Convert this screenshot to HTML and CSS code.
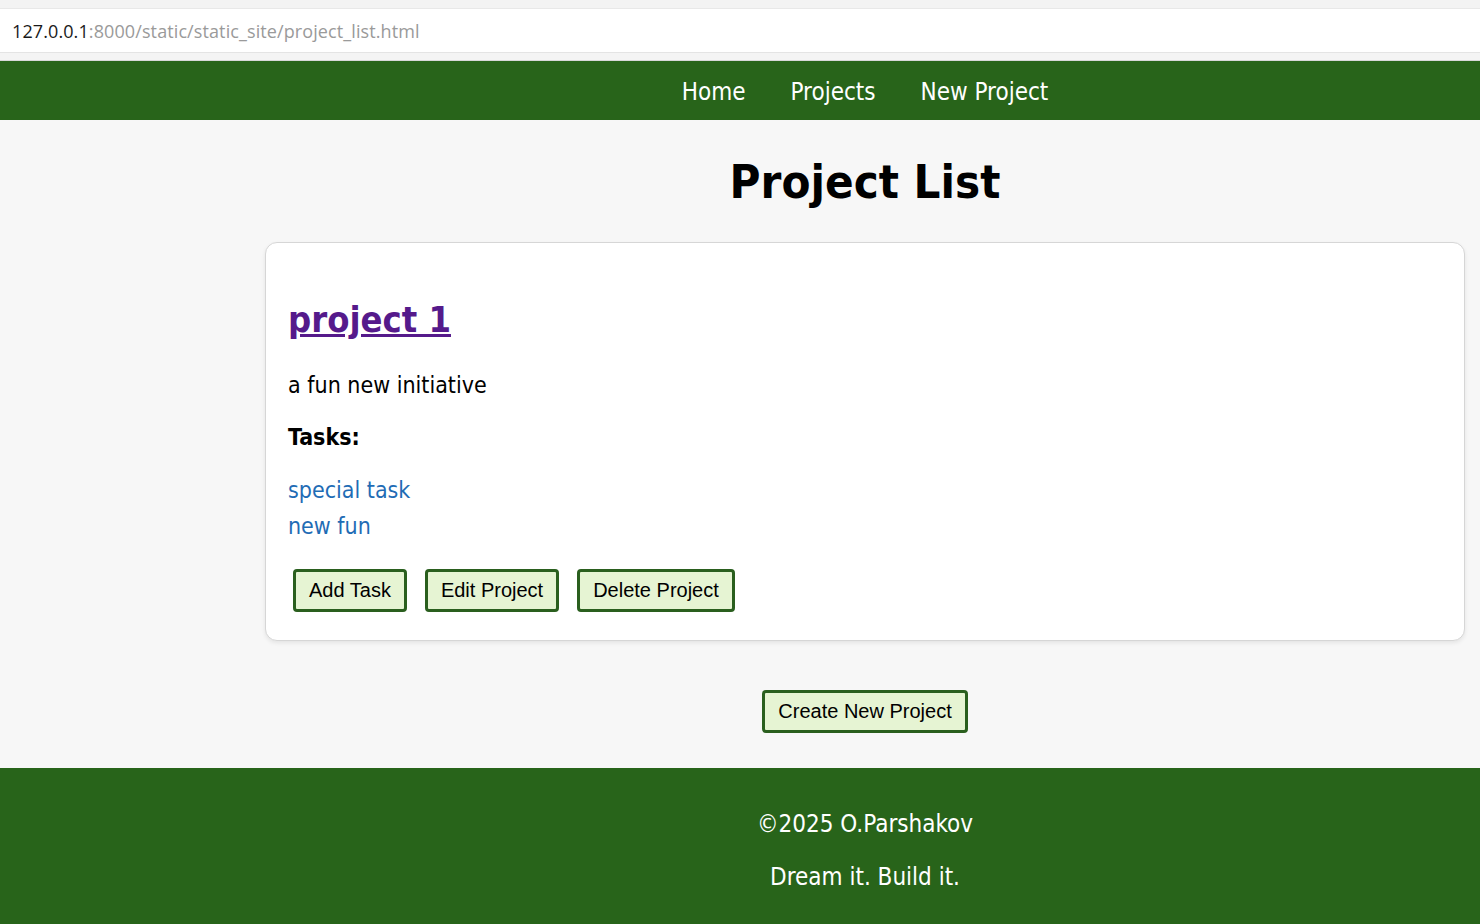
FILE: index.html
```html
<!DOCTYPE html>
<html lang="en">
<head>
<meta charset="utf-8">
<title>Project List</title>
<link rel="stylesheet" href="styles.css">
</head>
<body>
<div class="browser-top"></div>
<div class="address-bar"><span class="host">127.0.0.1</span><span class="path">:8000/static/static_site/project_list.html</span></div>
<div class="browser-gap"></div>
<header class="site-nav">
  <nav class="nav-inner">
    <a href="#">Home</a>
    <a href="#">Projects</a>
    <a href="#">New Project</a>
  </nav>
</header>
<main class="main">
  <h1 class="page-title">Project List</h1>
  <section class="card">
    <h2 class="project-title"><a href="#">project 1</a></h2>
    <p class="desc">a fun new initiative</p>
    <h3 class="tasks-title">Tasks:</h3>
    <ul class="task-list">
      <li><a href="#">special task</a></li>
      <li><a href="#">new fun</a></li>
    </ul>
    <div class="actions">
      <button class="btn">Add Task</button>
      <button class="btn">Edit Project</button>
      <button class="btn">Delete Project</button>
    </div>
  </section>
  <div class="create-row">
    <button class="btn">Create New Project</button>
  </div>
</main>
<footer class="site-footer">
  <div class="footer-inner">
    <p>©2025 O.Parshakov</p>
    <p>Dream it. Build it.</p>
  </div>
</footer>
</body>
</html>
```

FILE: styles.css
```css
* { box-sizing: border-box; }
html, body { margin: 0; padding: 0; }
body {
  font-family: "DejaVu Sans Condensed", "DejaVu Sans", sans-serif;
  background: #f7f7f7;
  color: #000;
  min-height: 924px;
  display: flex;
  flex-direction: column;
}
.browser-top { height: 9px; background: #f3f3f3; border-bottom: 1px solid #e8e8e8; }
.address-bar {
  height: 43px;
  background: #fff;
  padding-left: 12px;
  display: flex;
  align-items: center;
  font-family: "Open Sans", "Noto Sans", sans-serif;
  font-size: 18px;
  letter-spacing: 0.1px;
}
.address-bar .host { color: #1a1a1a; }
.address-bar .path { color: #9a9a9a; }
.browser-gap { height: 9px; background: #f4f4f4; border-top: 1px solid #e4e4e4; border-bottom: 1px solid #d8d8d8; }
.site-nav { background: #28641a; height: 59px; }
.nav-inner {
  margin-left: 250px;
  height: 100%;
  display: flex;
  justify-content: center;
  align-items: center;
  gap: 45px;
  padding-top: 2px;
}
.nav-inner a { color: #fff; text-decoration: none; font-size: 24px; }
.main { margin-left: 250px; padding: 0 15px; flex: 1; }
.page-title {
  text-align: center;
  font-size: 47px;
  font-weight: bold;
  margin: 34px 0 32px;
  line-height: 56px;
}
.card {
  background: #fff;
  border: 1px solid #d6d6d6;
  border-radius: 12px;
  box-shadow: 0 2px 4px rgba(0,0,0,0.08);
  padding: 52px 22px 28px;
}
.project-title { margin: 0; font-size: 36px; line-height: 50px; }
.project-title a { color: #551a8b; }
.desc { font-size: 23px; margin: 25px 0 0; line-height: 30px; }
.tasks-title { font-size: 23px; margin: 22px 0 0; line-height: 30px; }
.task-list { list-style: none; margin: 20px 0 0; padding: 0; }
.task-list li { font-size: 23px; line-height: 36px; }
.task-list a { color: #1f6cb5; text-decoration: none; }
.actions { display: flex; gap: 18px; margin: 25px 0 0 5px; }
.btn {
  font-family: "Liberation Sans", Arial, sans-serif;
  font-size: 20px;
  background: #e6f4d3;
  border: 3px solid #2a5f1e;
  border-radius: 4px;
  padding: 0 13px;
  height: 43px;
  color: #000;
}
.create-row { display: flex; justify-content: center; margin: 49px 0 35px; }
.site-footer { background: #28641a; height: 156px; }
.footer-inner { margin-left: 250px; text-align: center; color: #fff; font-size: 24px; padding-top: 41px; }
.footer-inner p { margin: 0 0 23px; line-height: 30px; }
```
